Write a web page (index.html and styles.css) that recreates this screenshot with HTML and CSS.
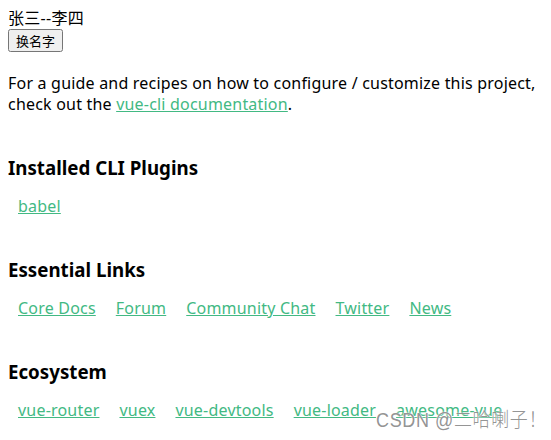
FILE: index.html
```html
<!DOCTYPE html>
<html lang="en">
<head>
    <meta charset="UTF-8">
    <meta name="viewport" content="width=device-width, initial-scale=1.0">
    <title>vue-demo</title>
    <link rel="stylesheet" href="styles.css">
</head>
<body>

    <div id="app">
        <div class="name">张三--李四</div>
        <div class="actions"><button class="rename">换名字</button></div>

        <div class="hello">
            <p>
                For a guide and recipes on how to configure / customize this project,<br>
                check out the <a href="#">vue-cli documentation</a>.
            </p>

            <h3>Installed CLI Plugins</h3>
            <ul>
                <li><a href="#">babel</a></li>
            </ul>

            <h3>Essential Links</h3>
            <ul><li><a href="#">Core Docs</a></li><li><a href="#">Forum</a></li><li><a href="#">Community Chat</a></li><li><a href="#">Twitter</a></li><li><a href="#">News</a></li></ul>

            <h3>Ecosystem</h3>
            <ul><li><a href="#">vue-router</a></li><li><a href="#">vuex</a></li><li><a href="#">vue-devtools</a></li><li><a href="#">vue-loader</a></li><li><a href="#">awesome-vue</a></li></ul>
        </div>
    </div>

    <div class="watermark">CSDN @二哈喇子！</div>

</body>
</html>
```

FILE: styles.css
```css
body {
    font-family: "Noto Sans", "Noto Sans CJK SC", sans-serif;
    font-size: 16px;
    line-height: 21px;
    letter-spacing: 0.2px;
    color: #000;
    background: #fff;
    overflow: hidden;
}

.name {
    letter-spacing: 0.3px;
}

.actions {
    height: 28px;
}

.rename {
    font-family: "Noto Sans CJK SC", sans-serif;
    font-size: 13px;
    line-height: 17px;
    letter-spacing: 0;
    padding: 1px 6px;
}

.hello p {
    margin: 16px 0;
}

h3 {
    margin: 40px 0 0;
    font-size: 18.72px;
    line-height: 25px;
    letter-spacing: 0;
}

ul {
    list-style-type: none;
    padding: 0;
}

li {
    display: inline-block;
    margin: 0 10px;
}

a {
    color: #42b983;
}

/* CSDN watermark over the bottom corner */
.watermark {
    position: absolute;
    right: 4px;
    top: 409px;
    font-family: "Liberation Sans", "Noto Sans CJK SC", sans-serif;
    font-size: 18px;
    line-height: 22px;
    letter-spacing: 0.6px;
    font-weight: 300;
    color: rgba(120, 120, 120, 0.8);
    text-shadow: 0 0 2px #fff, 0 0 1px #fff;
    transform: scaleY(1.15);
}
```
